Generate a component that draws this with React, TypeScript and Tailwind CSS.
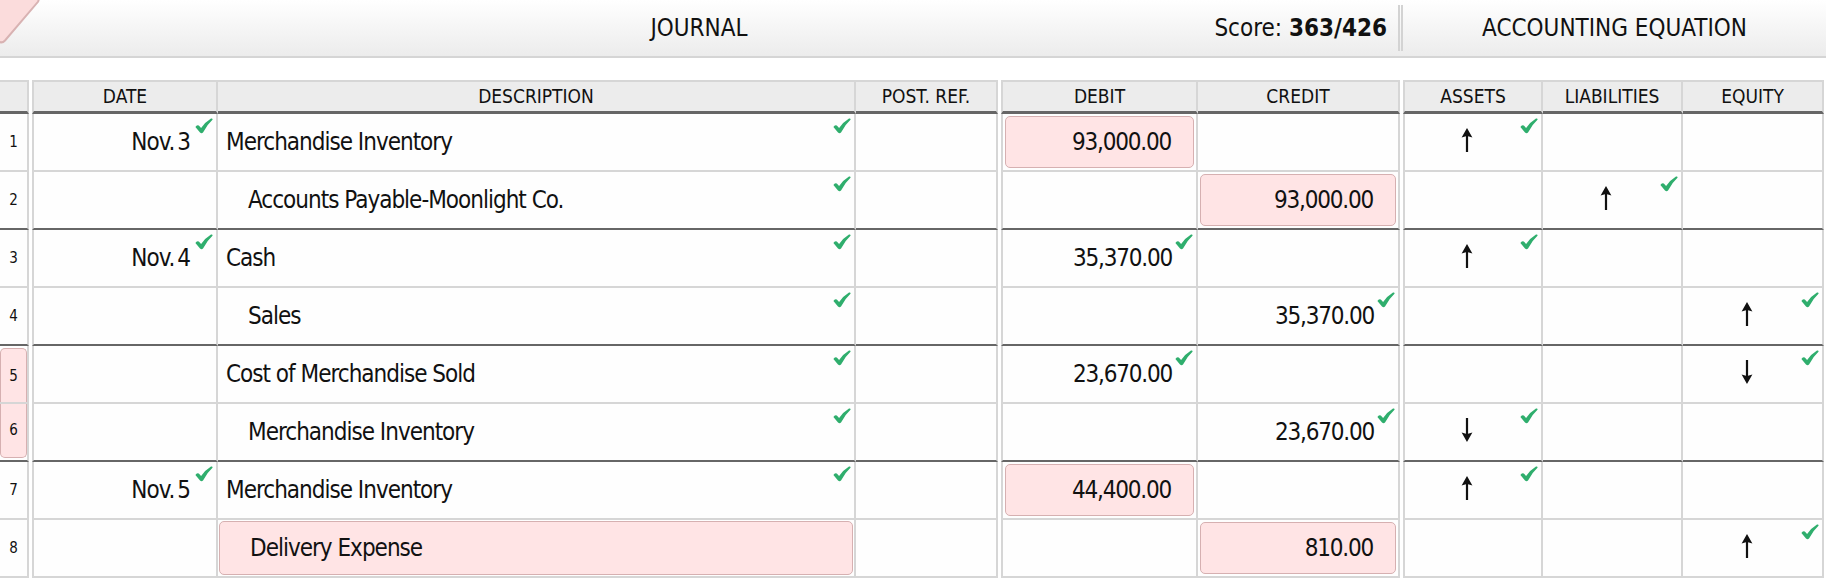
import React from 'react';

type Amt = { v: string; input?: boolean; check?: boolean } | null;
type Arrow = { dir: 'up' | 'down'; check?: boolean } | null;
type Row = {
  n: number;
  numBox?: 'top' | 'bottom';
  date?: string;
  desc: string;
  indent?: boolean;
  descInput?: boolean;
  descCheck?: boolean;
  debit?: Amt;
  credit?: Amt;
  assets?: Arrow;
  liab?: Arrow;
  equity?: Arrow;
  sep: 'light' | 'dark';
};

const rows: Row[] = [
  { n: 1, date: 'Nov. 3', desc: 'Merchandise Inventory', descCheck: true, debit: { v: '93,000.00', input: true }, assets: { dir: 'up', check: true }, sep: 'light' },
  { n: 2, desc: 'Accounts Payable-Moonlight Co.', indent: true, descCheck: true, credit: { v: '93,000.00', input: true }, liab: { dir: 'up', check: true }, sep: 'dark' },
  { n: 3, date: 'Nov. 4', desc: 'Cash', descCheck: true, debit: { v: '35,370.00', check: true }, assets: { dir: 'up', check: true }, sep: 'light' },
  { n: 4, desc: 'Sales', indent: true, descCheck: true, credit: { v: '35,370.00', check: true }, equity: { dir: 'up', check: true }, sep: 'dark' },
  { n: 5, numBox: 'top', desc: 'Cost of Merchandise Sold', descCheck: true, debit: { v: '23,670.00', check: true }, equity: { dir: 'down', check: true }, sep: 'light' },
  { n: 6, numBox: 'bottom', desc: 'Merchandise Inventory', indent: true, descCheck: true, credit: { v: '23,670.00', check: true }, assets: { dir: 'down', check: true }, sep: 'dark' },
  { n: 7, date: 'Nov. 5', desc: 'Merchandise Inventory', descCheck: true, debit: { v: '44,400.00', input: true }, assets: { dir: 'up', check: true }, sep: 'light' },
  { n: 8, desc: 'Delivery Expense', indent: true, descInput: true, credit: { v: '810.00', input: true }, equity: { dir: 'up', check: true }, sep: 'light' },
];

function Check() {
  return (
    <svg width="18" height="16" viewBox="0 0 18 16" className="absolute top-[4px] right-[3px]">
      <path
        d="M0.4 8.9 Q1.8 6.6 3.8 7.6 L6.1 9.9 Q10 4.2 16 0.5 Q17.9 0 17.5 1.8 Q12 6.8 8.2 14.2 Q6.8 16.2 5 14.6 Z"
        fill="#2fae6d"
      />
    </svg>
  );
}

function ArrowIcon({ dir }: { dir: 'up' | 'down' }) {
  return (
    <svg width="12" height="24" viewBox="0 0 12 24" className={dir === 'down' ? 'rotate-180' : ''}>
      <path d="M6 0 L11.4 9.4 L7.1 8.2 L7.1 24 L4.9 24 L4.9 8.2 L0.6 9.4 Z" fill="#111" />
    </svg>
  );
}

function PinkBox({ children, className }: { children?: React.ReactNode; className: string }) {
  return (
    <div className={`h-full w-full rounded-[5px] border-[1.5px] border-[#d6b0b1] bg-[#ffe4e5] flex items-center ${className}`}>
      {children}
    </div>
  );
}

export default function App() {
  return (
    <div className="relative w-[1826px] h-[578px] overflow-hidden bg-white text-[#111] font-['Liberation_Sans_Narrow','Arial_Narrow','DejaVu_Sans_Condensed',sans-serif]">
      {/* top bar */}
      <div className="h-[58px] border-b-2 border-[#d5d5d5] bg-linear-to-b from-white to-[#ececec] flex items-center">
        <div className="w-[1398px] grid grid-cols-[1fr_auto_1fr] items-center">
          <div />
          <div className="text-[24px] leading-none">JOURNAL</div>
          <div className="justify-self-end pr-[11px] text-[24px] leading-none">
            Score: <span className="font-bold">363/426</span>
          </div>
        </div>
        <div className="w-[5px] h-[46px] border-x-2 border-[#d3d3d3]" />
        <div className="flex-1 text-center text-[24px] leading-none">ACCOUNTING EQUATION</div>
      </div>

      {/* corner tab */}
      <svg width="42" height="46" viewBox="0 0 42 46" className="absolute left-0 top-0">
        <path d="M-2 -2 L36 -2 Q40 -2 38 1.8 L5 40.5 Q1.8 44 -2 41 Z" fill="#fbdcdc" stroke="#d8b2b2" strokeWidth="2" />
      </svg>

      <div className="h-[22px]" />

      {/* header row */}
      <div className="flex h-[34px] text-[19px] leading-none">
        <div className="w-[29px] border-t-2 border-r-2 border-b-[3px] border-t-[#d6d6d6] border-r-[#d6d6d6] border-b-[#666] bg-[#ececec]" />
        <div className="w-[3px]" />
        <div className="w-[186px] border-t-2 border-x-2 border-b-[3px] border-t-[#d6d6d6] border-x-[#d6d6d6] border-b-[#666] bg-[#ececec] flex items-center justify-center">DATE</div>
        <div className="w-[638px] border-t-2 border-r-2 border-b-[3px] border-t-[#d6d6d6] border-r-[#d6d6d6] border-b-[#666] bg-[#ececec] flex items-center justify-center">DESCRIPTION</div>
        <div className="w-[142px] border-t-2 border-r-2 border-b-[3px] border-t-[#d6d6d6] border-r-[#d6d6d6] border-b-[#666] bg-[#ececec] flex items-center justify-center">POST. REF.</div>
        <div className="w-[3px]" />
        <div className="w-[197px] border-t-2 border-x-2 border-b-[3px] border-t-[#d6d6d6] border-x-[#d6d6d6] border-b-[#666] bg-[#ececec] flex items-center justify-center">DEBIT</div>
        <div className="w-[202px] border-t-2 border-r-2 border-b-[3px] border-t-[#d6d6d6] border-r-[#d6d6d6] border-b-[#666] bg-[#ececec] flex items-center justify-center">CREDIT</div>
        <div className="w-[3px]" />
        <div className="w-[140px] border-t-2 border-x-2 border-b-[3px] border-t-[#d6d6d6] border-x-[#d6d6d6] border-b-[#666] bg-[#ececec] flex items-center justify-center">ASSETS</div>
        <div className="w-[140px] border-t-2 border-r-2 border-b-[3px] border-t-[#d6d6d6] border-r-[#d6d6d6] border-b-[#666] bg-[#ececec] flex items-center justify-center">LIABILITIES</div>
        <div className="w-[141px] border-t-2 border-r-2 border-b-[3px] border-t-[#d6d6d6] border-r-[#d6d6d6] border-b-[#666] bg-[#ececec] flex items-center justify-center">EQUITY</div>
      </div>

      {/* body rows */}
      {rows.map((r) => {
        const b = r.sep === 'dark' ? 'border-b-[#666]' : 'border-b-[#d6d6d6]';
        const arrowCell = (a: Arrow, w: string, first?: boolean) => (
          <div className={`relative ${w} h-full border-b-2 border-r-2 border-r-[#d6d6d6] ${first ? 'border-l-2 border-l-[#d6d6d6]' : ''} ${b} bg-[#fefefe] flex items-center justify-center pr-[12px]`}>
            {a && (
              <>
                <div className="mb-[5px]">
                  <ArrowIcon dir={a.dir} />
                </div>
                {a.check && <Check />}
              </>
            )}
          </div>
        );
        const amtCell = (a: Amt | undefined, w: string, first?: boolean) => (
          <div className={`relative ${w} h-full border-b-2 border-r-2 border-r-[#d6d6d6] ${first ? 'border-l-2 border-l-[#d6d6d6]' : ''} ${b} bg-[#fefefe] flex items-center justify-end text-[24px] tracking-[-1.2px] leading-none ${a && a.input ? 'p-[2px]' : 'pr-[24px]'}`}>
            {a && a.input && <PinkBox className="justify-end pr-[22px]">{a.v}</PinkBox>}
            {a && !a.input && <span>{a.v}</span>}
            {a && a.check && <Check />}
          </div>
        );
        return (
          <div key={r.n} className="flex h-[58px]">
            <div className={`w-[29px] h-full border-b-2 border-r-2 border-r-[#d6d6d6] ${b} bg-[#fefefe] text-[15px] leading-none ${r.numBox === 'top' ? 'pt-[2px]' : r.numBox === 'bottom' ? 'pb-[2px]' : 'flex items-center justify-center'}`}>
              {r.numBox === 'top' && (
                <div className="h-full w-full rounded-t-[5px] border-t-[1.5px] border-x-[1.5px] border-[#d6b0b1] bg-[#ffe4e5] flex items-center justify-center pt-[2px]">{r.n}</div>
              )}
              {r.numBox === 'bottom' && (
                <div className="h-full w-full rounded-b-[5px] border-b-[1.5px] border-x-[1.5px] border-[#d6b0b1] bg-[#ffe4e5] flex items-center justify-center">{r.n}</div>
              )}
              {!r.numBox && r.n}
            </div>
            <div className="w-[3px]" />
            <div className={`relative w-[186px] h-full border-b-2 border-x-2 border-x-[#d6d6d6] ${b} bg-[#fefefe] flex items-center justify-end pr-[26px] text-[24px] tracking-[-1px] [word-spacing:-3px] leading-none`}>
              {r.date && (
                <>
                  <span>{r.date}</span>
                  <Check />
                </>
              )}
            </div>
            <div className={`relative w-[638px] h-full border-b-2 border-r-2 border-r-[#d6d6d6] ${b} bg-[#fefefe] flex items-center text-[24px] tracking-[-1px] leading-none ${r.descInput ? 'p-[1px]' : r.indent ? 'pl-[30px]' : 'pl-[8px]'}`}>
              {r.descInput ? <PinkBox className="pl-[30px]">{r.desc}</PinkBox> : <span>{r.desc}</span>}
              {r.descCheck && <Check />}
            </div>
            <div className={`w-[142px] h-full border-b-2 border-r-2 border-r-[#d6d6d6] ${b} bg-[#fefefe]`} />
            <div className="w-[3px]" />
            {amtCell(r.debit, 'w-[197px]', true)}
            {amtCell(r.credit, 'w-[202px]')}
            <div className="w-[3px]" />
            {arrowCell(r.assets ?? null, 'w-[140px]', true)}
            {arrowCell(r.liab ?? null, 'w-[140px]')}
            {arrowCell(r.equity ?? null, 'w-[141px]')}
          </div>
        );
      })}
    </div>
  );
}
